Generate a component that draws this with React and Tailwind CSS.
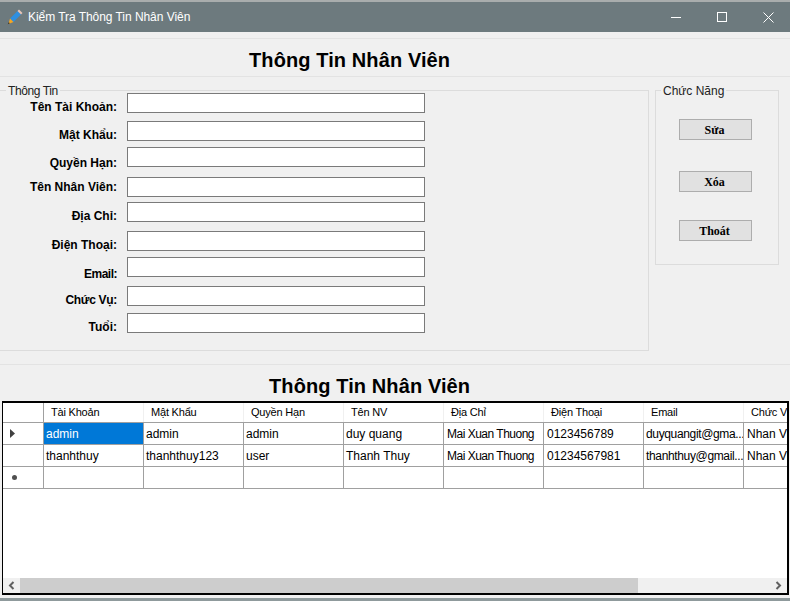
import React from "react";

const fields = [
  { label: "Tên Tài Khoản:", gap: "mt-0", labelOffset: "pt-[7px]" },
  { label: "Mật Khẩu:", gap: "mt-[8px]", labelOffset: "pt-[7px]" },
  { label: "Quyền Hạn:", gap: "mt-[6px]", labelOffset: "pt-[9px]" },
  { label: "Tên Nhân Viên:", gap: "mt-[10px]", labelOffset: "pt-[3px]" },
  { label: "Địa Chỉ:", gap: "mt-[5px]", labelOffset: "pt-[7px]" },
  { label: "Điện Thoại:", gap: "mt-[9px]", labelOffset: "pt-[7px]" },
  { label: "Email:", gap: "mt-[6px]", labelOffset: "pt-[10px] tracking-[-0.5px]" },
  { label: "Chức Vụ:", gap: "mt-[9px]", labelOffset: "pt-[7px] tracking-[-0.3px]" },
  { label: "Tuổi:", gap: "mt-[7px]", labelOffset: "pt-[7px]" },
];

const columns = ["Tài Khoản", "Mật Khẩu", "Quyền Hạn", "Tên NV", "Địa Chỉ", "Điện Thoại", "Email", "Chức Vụ"];

const rows = [
  ["admin", "admin", "admin", "duy quang", "Mai Xuan Thuong", "0123456789", "duyquangit@gma...", "Nhan Vien"],
  ["thanhthuy", "thanhthuy123", "user", "Thanh Thuy", "Mai Xuan Thuong", "01234567981", "thanhthuy@gmail...", "Nhan Vien"],
  ["", "", "", "", "", "", "", ""],
];

// per column tweaks so the text widths land like the original grid
const cellClass = [
  "pl-[2px]",
  "pl-[2px]",
  "pl-[2px]",
  "pl-[2px]",
  "pl-[3px] tracking-[-0.5px]",
  "pl-[3px]",
  "pl-[2px] tracking-[-0.35px]",
  "pl-[3px]",
];

const actions = [
  { label: "Sửa", gap: "mt-[20px]" },
  { label: "Xóa", gap: "mt-[31px]" },
  { label: "Thoát", gap: "mt-[28px]" },
];

const App = () => {
  return (
    <div className="w-[790px] h-[601px] overflow-hidden bg-[#f0f0f0] text-[12px] leading-[14px] text-black flex flex-col font-['Liberation_Sans',sans-serif]">
      {/* Title bar */}
      <div className="h-[32px] shrink-0 bg-[#6d7a7e] border-t-2 border-[#a9adad] flex items-center text-white">
        <svg width="16" height="16" viewBox="0 0 16 16" className="ml-[7px]">
          <path d="M3 9.5 L10.5 2 L14 5.5 L6.5 13 Z" fill="#2f8fe0" />
          <path d="M10.5 2 L12 0.5 L15.5 4 L14 5.5 Z" fill="#e8c4b8" />
          <path d="M3 9.5 L6.5 13 L1.5 15 Z" fill="#f5a623" />
          <path d="M1.8 13.2 L2.8 14.2 L0.8 15.2 Z" fill="#222" />
        </svg>
        <span className="ml-[5px] text-[12px] tracking-[-0.05px]">Kiểm Tra Thông Tin Nhân Viên</span>
        <div className="ml-auto flex items-center">
          <div className="w-[46px] flex justify-center">
            <div className="w-[10px] h-px bg-white" />
          </div>
          <div className="w-[46px] flex justify-center">
            <div className="w-[10px] h-[10px] border border-white" />
          </div>
          <div className="w-[46px] mr-[-1px] flex justify-center">
            <svg width="11" height="11" viewBox="0 0 11 11" stroke="white" fill="none">
              <path d="M0.5 0.5 L10.5 10.5 M10.5 0.5 L0.5 10.5" />
            </svg>
          </div>
        </div>
      </div>

      {/* Heading */}
      <div className="mt-[6px] h-[39px] shrink-0 border-y border-[#e3e3e3] flex items-center pl-[249px] pt-[4px]">
        <h1 className="text-[20px] leading-[24px] font-bold tracking-[0.1px]">Thông Tin Nhân Viên</h1>
      </div>

      {/* Form area */}
      <div className="mt-[13px] h-[261px] shrink-0 flex items-start">
        <div className="relative w-[649px] h-[261px] border-t border-r border-b border-[#dcdcdc]">
          <span className="absolute left-[6px] top-[-7px] px-[2px] bg-[#f0f0f0] tracking-[-0.4px] text-[#222]">Thông Tin</span>
          <div className="pt-[2px] flex flex-col">
            {fields.map((field) => (
              <div key={field.label} className={`flex items-start ${field.gap}`}>
                <label className={`w-[117px] h-[20px] text-right font-bold whitespace-nowrap ${field.labelOffset}`}>
                  {field.label}
                </label>
                <input
                  type="text"
                  className="ml-[10px] w-[298px] h-[20px] bg-white border border-[#7a7a7a] outline-none"
                />
              </div>
            ))}
          </div>
        </div>

        <div className="relative ml-[6px] w-[124px] h-[175px] border border-[#dcdcdc]">
          <span className="absolute left-[5px] top-[-7px] px-[2px] bg-[#f0f0f0] text-[#222]">Chức Năng</span>
          <div className="flex flex-col items-start pl-[23px] pt-[8px]">
            {actions.map((action) => (
              <button
                key={action.label}
                className={`w-[73px] h-[21px] pr-[2px] bg-[#e1e1e1] border border-[#adadad] font-bold font-['Liberation_Serif',serif] ${action.gap}`}
              >
                {action.label}
              </button>
            ))}
          </div>
        </div>
      </div>

      <div className="mt-[13px] h-px shrink-0 bg-[#e3e3e3]" />

      {/* Second heading */}
      <h2 className="mt-[9px] h-[24px] shrink-0 pl-[269px] text-[20px] leading-[24px] font-bold tracking-[0.1px]">
        Thông Tin Nhân Viên
      </h2>

      {/* Data grid */}
      <div className="mt-[3px] ml-[2px] w-[787px] h-[194px] shrink-0 bg-white border-t-2 border-b-2 border-r-2 border-l border-black flex flex-col overflow-hidden">
        <div className="flex-1 overflow-hidden">
          <div className="flex h-[20px] border-b border-[#a0a0a0] text-[11px] tracking-[-0.2px]">
            <div className="w-[41px] shrink-0 border-r border-[#a0a0a0]" />
            {columns.map((col) => (
              <div key={col} className="w-[100px] shrink-0 pl-[7px] pt-[2px] whitespace-nowrap border-r border-[#f0f0f0]">
                {col}
              </div>
            ))}
          </div>
          {rows.map((row, i) => (
            <div key={i} className="flex h-[22px] border-b border-[#a0a0a0]">
              <div className="w-[41px] shrink-0 border-r border-[#a0a0a0] flex items-center pl-[7px]">
                {i === 0 && (
                  <svg width="5" height="9" viewBox="0 0 5 9">
                    <path d="M0 0 L5 4.5 L0 9 Z" fill="#404040" />
                  </svg>
                )}
                {i === 2 && <div className="ml-[2px] w-[5px] h-[5px] rounded-full bg-[#505050]" />}
              </div>
              {row.map((cell, j) => (
                <div
                  key={j}
                  className={
                    i === 0 && j === 0
                      ? `w-[100px] shrink-0 pt-[4px] whitespace-nowrap overflow-hidden border-r border-[#a0a0a0] bg-[#0078d7] text-white ${cellClass[j]}`
                      : `w-[100px] shrink-0 pt-[4px] whitespace-nowrap overflow-hidden border-r border-[#a0a0a0] ${cellClass[j]}`
                  }
                >
                  {cell}
                </div>
              ))}
            </div>
          ))}
        </div>

        {/* Horizontal scrollbar */}
        <div className="h-[15px] shrink-0 flex items-center bg-[#f0f0f0]">
          <div className="w-[17px] flex justify-center">
            <svg width="7" height="9" viewBox="0 0 7 9" fill="none" stroke="#606060" strokeWidth="2">
              <path d="M5.5 1 L2 4.5 L5.5 8" />
            </svg>
          </div>
          <div className="w-[618px] h-full bg-[#cdcdcd]" />
          <div className="ml-auto w-[17px] flex justify-center">
            <svg width="7" height="9" viewBox="0 0 7 9" fill="none" stroke="#606060" strokeWidth="2">
              <path d="M1.5 1 L5 4.5 L1.5 8" />
            </svg>
          </div>
        </div>
      </div>

      {/* Window bottom edge */}
      <div className="mt-[3px] flex-1 bg-[#8f9a9c]" />
    </div>
  );
};

export default App;
